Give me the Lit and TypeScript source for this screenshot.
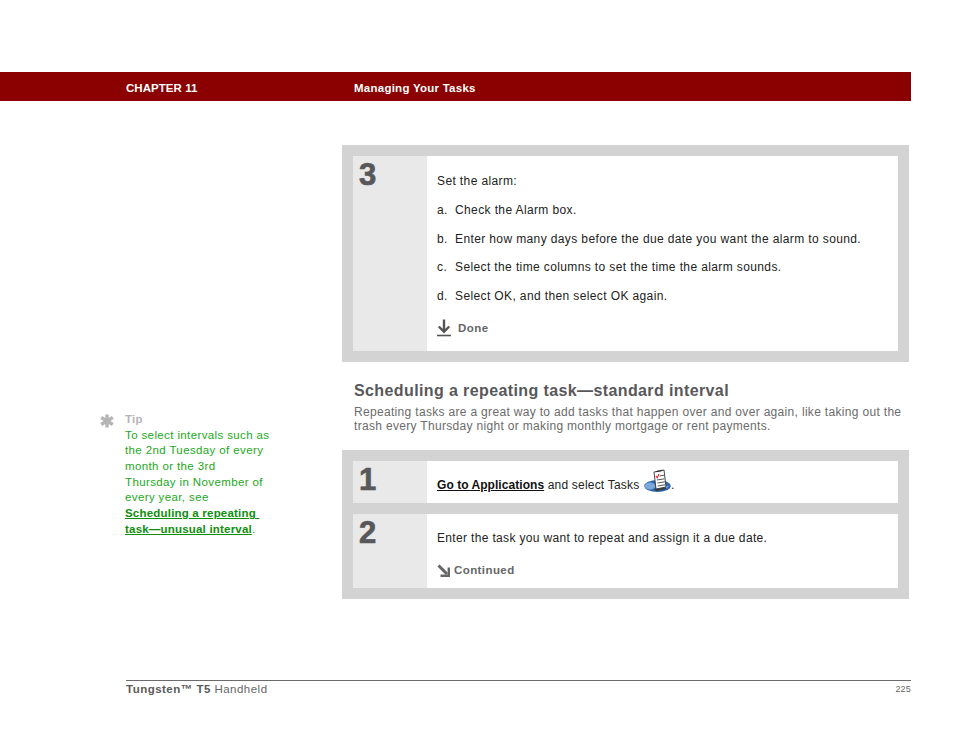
import { LitElement, html, css } from "lit";
import { customElement } from "lit/decorators.js";

const doneIcon = html`<svg class="done-ic" width="16" height="18" viewBox="0 0 16 18"><path d="M8 0.5V12M2.8 7.5 8 12.8 13.2 7.5" fill="none" stroke="#555" stroke-width="2.4"/><path d="M1 16.5H15" stroke="#555" stroke-width="1.6"/></svg>`;
const contIcon = html`<svg class="cont-ic" width="13" height="13" viewBox="0 0 13 13"><path d="M1.5 1.5 10 10" fill="none" stroke="#666" stroke-width="3"/><path d="M11.8 3.5V11.8H3.5" fill="none" stroke="#666" stroke-width="2.4"/></svg>`;
const star = html`<svg class="star" width="14" height="14" viewBox="0 0 14 14"><g stroke="#b5b5b5" stroke-width="3.4"><path d="M7 0.5V13.5"/><path d="M1.2 3.5 12.8 10.5"/><path d="M12.8 3.5 1.2 10.5"/></g></svg>`;
const tasks = html`<svg class="tasks" width="27" height="25" viewBox="0 0 27 25">
  <ellipse cx="13.5" cy="18" rx="13.2" ry="6" fill="#2f66ad"/>
  <ellipse cx="6" cy="18" rx="5.2" ry="3.6" fill="#7aa8dd"/>
  <path d="M20 17.5 25 18 22 21Z" fill="#6f9fd8"/>
  <path d="M10 21.5 21.5 19.5 22.5 21 12 23Z" fill="#3a3a3a"/>
  <path d="M10 4 20 2 22 19 12 21Z" fill="#fff" stroke="#333" stroke-width="0.9"/>
  <path d="M12.5 3.6 18.5 2.4" stroke="#333" stroke-width="1.2"/>
  <path d="M11.8 8 13.2 9.8 15 6" fill="none" stroke="#d22" stroke-width="1.1"/>
  <path d="M15.5 8 20 7.2M13 12 20.5 10.8M13.4 15 20.8 13.8M13.7 18 21 16.8" stroke="#555" stroke-width="1"/>
</svg>`;

@customElement("app-root")
export class AppRoot extends LitElement {
  static styles = css`
    :host { display: block; width: 954px; height: 738px; background: #fff; font-family: "Liberation Sans", Arial, sans-serif; overflow: hidden; }
    .page { display: flex; flex-direction: column; height: 738px; padding-top: 72px; box-sizing: border-box; }
    .bar { width: 911px; height: 29px; box-sizing: border-box; background: #8b0000; color: #fff; font-size: 11.5px; font-weight: 700; display: grid; grid-template-columns: 228px auto; padding: 3px 0 0 126px; align-items: center; line-height: 26px; }
    .chap { letter-spacing: 0.05px; }
    .ttl { letter-spacing: 0.25px; }
    .content { display: grid; grid-template-columns: 216px 567px; padding-left: 126px; flex: 1; }
    .side { position: relative; margin-left: -1px; padding-top: 311px; font-size: 11.5px; line-height: 15.7px; color: #22a822; white-space: nowrap; letter-spacing: 0.38px; }
    .star { position: absolute; left: -25px; top: 313px; }
    .tip { color: #b5b5b5; font-weight: 700; line-height: 14px; margin-bottom: 1.6px; letter-spacing: 0.2px; }
    .side a { color: #0e8f0e; font-weight: 700; text-decoration: underline; letter-spacing: 0.2px; }
    .main { padding-top: 44px; display: flex; flex-direction: column; }
    .box { background: #d3d3d3; padding: 11px; display: flex; flex-direction: column; gap: 11px; }
    .row { display: grid; grid-template-columns: 74px 1fr; background: #fff; }
    .num { background: #e9e9e9; color: #58585a; font-size: 31px; font-weight: 700; line-height: 38px; padding-left: 6px; -webkit-text-stroke: 0.7px #58585a; }
    .body { padding: 0 10px; font-size: 12px; line-height: 15px; color: #222; letter-spacing: 0.38px; white-space: nowrap; }
    .r3 { height: 195px; }
    .r3 .body { padding-top: 18.3px; }
    .body p { margin: 0 0 13.7px; }
    .li { display: inline-block; width: 18px; }
    .done { display: flex; align-items: center; color: #666; font-weight: 700; height: 18px; margin-top: 15.7px; gap: 6px; font-size: 11.5px; letter-spacing: 0.5px; }
    .done-ic { margin: 0 0 2px -1px; }
    .h { margin: 20px 0 0 12px; color: #58585a; font-size: 16px; font-weight: 700; line-height: 18px; letter-spacing: 0.39px; white-space: nowrap; }
    .intro { margin: 4.5px 0 0 12px; color: #6b6b6b; font-size: 12px; line-height: 14.5px; letter-spacing: 0.32px; white-space: nowrap; }
    .b2 { margin-top: 16.5px; }
    .r1 { height: 42px; }
    .r1 .body { display: flex; align-items: center; padding-top: 6px; height: 36px; white-space: pre; letter-spacing: 0.2px; }
    .r1 a { color: #111; font-weight: 700; text-decoration: underline; letter-spacing: 0.05px; }
    .tasks { margin: -9px 0 0 1px; }
    .r2 { height: 74px; }
    .r2 .body { padding-top: 17px; letter-spacing: 0.34px; }
    .cont { display: flex; align-items: center; gap: 4px; color: #666; font-weight: 700; font-size: 11.5px; letter-spacing: 0.42px; margin-top: 17px; height: 14px; }
    .foot { margin: 0 0 0 126px; width: 785px; border-top: 1px solid #6b6b6b; height: 58px; box-sizing: border-box; display: flex; justify-content: space-between; padding-top: 1px; color: #666; font-size: 11.5px; line-height: 15px; letter-spacing: 0.48px; }
    .foot b { font-weight: 700; color: #5a5a5a; }
    .pg { font-size: 9px; letter-spacing: 0.2px; }
  `;
  render() {
    return html`<div class="page">
      <div class="bar"><span class="chap">CHAPTER 11</span><span class="ttl">Managing Your Tasks</span></div>
      <div class="content">
        <aside class="side">
          ${star}
          <div class="tip">Tip</div>
          To select intervals such as<br>the 2nd Tuesday of every<br>month or the 3rd<br>Thursday in November of<br>every year, see<br>
          <a>Scheduling a repeating&nbsp;<br>task—unusual interval</a>.
        </aside>
        <main class="main">
          <div class="box">
            <div class="row r3">
              <div class="num">3</div>
              <div class="body">
                <p>Set the alarm:</p>
                <p><span class="li">a.</span>Check the Alarm box.</p>
                <p><span class="li">b.</span>Enter how many days before the due date you want the alarm to sound.</p>
                <p><span class="li">c.</span>Select the time columns to set the time the alarm sounds.</p>
                <p><span class="li">d.</span>Select OK, and then select OK again.</p>
                <div class="done">${doneIcon}<span>Done</span></div>
              </div>
            </div>
          </div>
          <h2 class="h">Scheduling a repeating task—standard interval</h2>
          <div class="intro">Repeating tasks are a great way to add tasks that happen over and over again, like taking out the<br>trash every Thursday night or making monthly mortgage or rent payments.</div>
          <div class="box b2">
            <div class="row r1">
              <div class="num">1</div>
              <div class="body"><a>Go to Applications</a><span> and select Tasks </span>${tasks}<span>.</span></div>
            </div>
            <div class="row r2">
              <div class="num">2</div>
              <div class="body">
                Enter the task you want to repeat and assign it a due date.
                <div class="cont">${contIcon}<span>Continued</span></div>
              </div>
            </div>
          </div>
        </main>
      </div>
      <footer class="foot"><span><b>Tungsten™ T5</b> Handheld</span><span class="pg">225</span></footer>
    </div>`;
  }
}
